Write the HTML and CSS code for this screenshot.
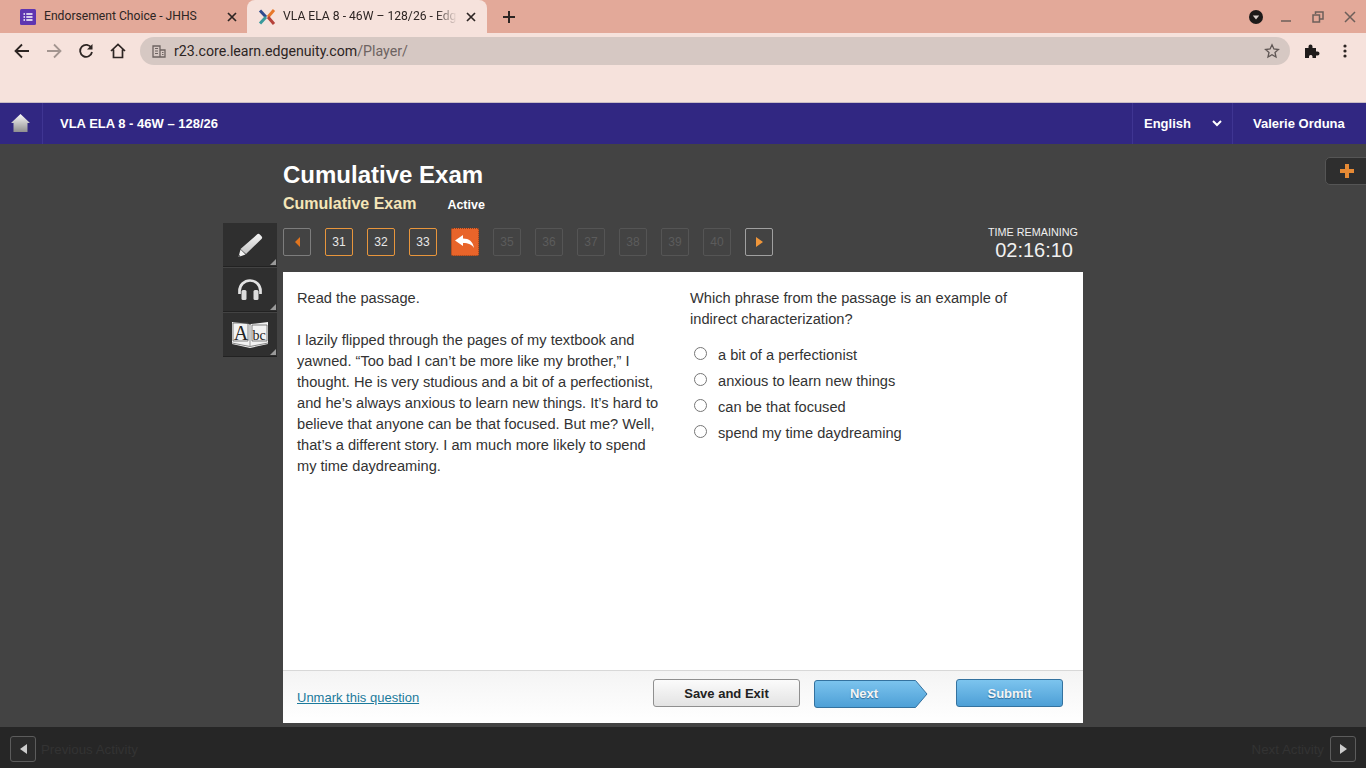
FILE: index.html
```html
<!DOCTYPE html>
<html lang="en">
<head>
<meta charset="utf-8">
<title>VLA ELA 8 - 46W – 128/26 - Edgenuity</title>
<link rel="stylesheet" href="styles.css">
</head>
<body>
<header class="browser">
  <div class="tabstrip">
    <div class="tab">
      <svg class="tab-icon" width="16" height="16" viewBox="0 0 16 16"><rect width="16" height="16" rx="1.5" fill="#5e35b1"/><path d="M3.5 4.2h1.5v1.5H3.500zM6.300 4.200h6.200v1.500H6.300zM3.500 7.200h1.500v1.500H3.500zM6.300 7.200h6.200v1.500H6.300zM3.500 10.200h1.500v1.500H3.500zM6.300 10.200h6.200v1.500H6.300z" fill="#fff"/></svg>
      <span class="tab-title">Endorsement Choice - JHHS</span>
      <svg class="tab-close" width="10" height="10" viewBox="0 0 10 10"><path d="M1 1l8 8M9 1l-8 8" stroke="#2d2523" stroke-width="1.700"/></svg>
    </div>
    <div class="tab tab-active">
      <svg class="tab-icon" width="18" height="18" viewBox="0 0 18 18"><path d="M2 2.500L8 9" stroke="#2e4a8e" stroke-width="3"/><path d="M16 2L10 9" stroke="#e8792b" stroke-width="3"/><path d="M2 15.500L8 9" stroke="#3a9a9c" stroke-width="3"/><path d="M16 16L10 9" stroke="#b5413a" stroke-width="3"/></svg>
      <span class="tab-title tab-title-fade">VLA ELA 8 - 46W – 128/26 - Edg</span>
      <svg class="tab-close" width="10" height="10" viewBox="0 0 10 10"><path d="M1 1l8 8M9 1l-8 8" stroke="#2d2523" stroke-width="1.700"/></svg>
    </div>
    <svg class="new-tab" width="12" height="12" viewBox="0 0 12 12"><path d="M6 0v12M0 6h12" stroke="#2d2523" stroke-width="2"/></svg>
    <div class="window-controls">
      <svg width="16" height="16" viewBox="0 0 16 16"><circle cx="8" cy="8" r="7" fill="#1d1a19"/><path d="M4.800 6.500h6.400L8 10.500z" fill="#d9d0cc"/></svg>
      <svg class="win-min" width="12" height="12" viewBox="0 0 12 12"><path d="M1 10h10" stroke="#6d5f5a" stroke-width="1.500"/></svg>
      <svg class="win-max" width="12" height="12" viewBox="0 0 12 12"><path d="M3.500 3V1h7.500v7h-3M1 4h6.500v7H1z" fill="none" stroke="#6d5f5a" stroke-width="1.500"/></svg>
      <svg class="win-close" width="12" height="12" viewBox="0 0 12 12"><path d="M1 1l10 10M11 1L1 11" stroke="#6d5f5a" stroke-width="1.500"/></svg>
    </div>
  </div>
  <div class="toolbar">
    <svg class="tb-back" width="16" height="16" viewBox="0 0 16 16"><path d="M15 8H2M8 1.500L1.500 8 8 14.500" fill="none" stroke="#2d2523" stroke-width="1.800"/></svg>
    <svg class="tb-forward" width="16" height="16" viewBox="0 0 16 16"><path d="M1 8h13M8 1.500L14.500 8 8 14.500" fill="none" stroke="#a39590" stroke-width="1.800"/></svg>
    <svg class="tb-reload" width="16" height="16" viewBox="0 0 16 16"><path d="M13.400 5A6 6 0 1 0 14 9" fill="none" stroke="#2d2523" stroke-width="1.800"/><path d="M14.500 1v5.500H9z" fill="#2d2523"/></svg>
    <svg class="tb-home" width="16" height="16" viewBox="0 0 16 16"><path d="M1 8l7-6.500L15 8M3.500 6.500V14.500h9V6.500" fill="none" stroke="#2d2523" stroke-width="1.700"/></svg>
    <div class="omnibox">
      <svg class="omni-site" width="14" height="14" viewBox="0 0 14 14"><path d="M1 2h7v11H1zM8 6h5v7H8z" fill="none" stroke="#6d6361" stroke-width="1.300"/><path d="M3 4.500h3M3 7h3M3 9.500h3M10 8.500h1.500M10 10.500h1.500" stroke="#6d6361" stroke-width="1.200"/></svg>
      <span class="url">r23.core.learn.edgenuity.com<span class="url-path">/Player/</span></span>
      <svg class="omni-star" width="16" height="16" viewBox="0 0 16 16"><path d="M8 1.800l1.900 4.200 4.500.5-3.400 3 1 4.500L8 11.700 4 14l1-4.500-3.400-3 4.500-.5z" fill="none" stroke="#5f5654" stroke-width="1.300"/></svg>
    </div>
    <svg class="tb-ext" width="16" height="16" viewBox="0 0 16 16"><path d="M1 5h3.500V3.500a2 2 0 0 1 4 0V5H12v3.500h1.500a2 2 0 0 1 0 4H12V15H8.500v-1.500a1.800 1.800 0 0 0-3.500 0V15H1z" fill="#1f1b1a"/></svg>
    <svg class="tb-menu" width="4" height="14" viewBox="0 0 4 14"><circle cx="2" cy="2" r="1.600" fill="#2d2523"/><circle cx="2" cy="7" r="1.600" fill="#2d2523"/><circle cx="2" cy="12" r="1.600" fill="#2d2523"/></svg>
  </div>
  <div class="bookmarks"></div>
</header>

<nav class="appbar">
  <a class="app-home">
    <svg width="19" height="18" viewBox="0 0 19 18"><defs><linearGradient id="homeFill" x1="0" y1="0" x2="0" y2="1"><stop offset="0" stop-color="#fbfbfb"/><stop offset="1" stop-color="#8f8f8f"/></linearGradient></defs><path d="M9.500 0L19 9H16.500V18H2.500V9H0z" fill="url(#homeFill)"/></svg>
  </a>
  <div class="app-title">VLA ELA 8 - 46W – 128/26</div>
  <div class="app-lang"><span>English</span><svg width="10" height="7" viewBox="0 0 10 7"><path d="M1 1l4 4 4-4" fill="none" stroke="#fff" stroke-width="2"/></svg></div>
  <div class="app-user">Valerie Orduna</div>
</nav>

<main class="stage">
  <button class="plus-tab"><svg width="14" height="14" viewBox="0 0 14 14"><path d="M5 0h4v5h5v4H9v5H5V9H0V5h5z" fill="#e68a35"/></svg></button>
  <div class="exam">
    <div class="exam-head">
      <h1 class="exam-title">Cumulative Exam</h1>
      <div class="exam-sub"><span class="exam-name">Cumulative Exam</span><span class="exam-status">Active</span></div>
    </div>
    <aside class="tools">
      <div class="tool">
        <svg width="28" height="28" viewBox="0 0 28 28"><defs><linearGradient id="toolFill" x1="0" y1="0" x2="0" y2="1"><stop offset="0" stop-color="#f4f4f4"/><stop offset="1" stop-color="#c4c4c4"/></linearGradient></defs><path d="M21 3.500a2 2 0 0 1 2.800 0l1.700 1.700a2 2 0 0 1 0 2.800L10 23 4.500 18z" fill="url(#toolFill)"/><path d="M4.500 18.500L9.500 23.500 2.500 26z" fill="#f4f4f4"/><path d="M3.300 24l-.8 2 2.100-.8z" fill="#333"/></svg>
      </div>
      <div class="tool">
        <svg width="26" height="21" viewBox="0 0 26 21"><path d="M2.500 15V12a10.500 10.500 0 0 1 21 0v3" fill="none" stroke="#e2e2e2" stroke-width="2.700"/><rect x="4.500" y="11" width="5" height="10" rx="1.500" fill="#dcdcdc"/><rect x="16.500" y="11" width="5" height="10" rx="1.500" fill="#dcdcdc"/></svg>
      </div>
      <div class="tool">
        <svg width="36" height="27" viewBox="0 0 36 27"><path d="M0 1l17 2 1 1 1-1 17-2v22l-18 4-18-4z" fill="#f2f2f2"/><path d="M0 22l18 3.500 18-3.500" fill="none" stroke="#888" stroke-width="1"/><path d="M18 4v21" stroke="#999" stroke-width="1"/><path d="M1 2h15v18H1zM20 4h15v16H20z" fill="none" stroke="#555" stroke-width=".7"/><text class="abc-a" x="9" y="18.500" text-anchor="middle">A</text><text class="abc-bc" x="27" y="18.500" text-anchor="middle">bc</text></svg>
      </div>
    </aside>
    <div class="qnav">
      <button class="qbtn qbtn-back"><svg width="5" height="10" viewBox="0 0 5 10"><path d="M5 0v10L0 5z" fill="#e0751f"/></svg></button>
      <button class="qbtn qbtn-done">31</button>
      <button class="qbtn qbtn-done">32</button>
      <button class="qbtn qbtn-done">33</button>
      <button class="qbtn qbtn-current"><svg width="20" height="14" viewBox="0 0 20 14"><path d="M0 5.500L8 0v3.500c6 0 10 3 11 9.500-2-3.500-5.500-5-11-5V11z" fill="#fff"/></svg></button>
      <button class="qbtn qbtn-off">35</button>
      <button class="qbtn qbtn-off">36</button>
      <button class="qbtn qbtn-off">37</button>
      <button class="qbtn qbtn-off">38</button>
      <button class="qbtn qbtn-off">39</button>
      <button class="qbtn qbtn-off">40</button>
      <button class="qbtn qbtn-forward"><svg width="7" height="10" viewBox="0 0 7 10"><path d="M0 0v10l7-5z" fill="#f0963a"/></svg></button>
      <div class="timer"><div class="timer-label">TIME REMAINING</div><div class="timer-value">02:16:10</div></div>
    </div>
    <section class="card">
      <div class="card-body">
        <div class="passage">
          <p>Read the passage.</p>
          <p>I lazily flipped through the pages of my textbook and yawned. “Too bad I can’t be more like my brother,” I thought. He is very studious and a bit of a perfectionist, and he’s always anxious to learn new things. It’s hard to believe that anyone can be that focused. But me? Well, that’s a different story. I am much more likely to spend my time daydreaming.</p>
        </div>
        <div class="question">
          <p>Which phrase from the passage is an example of indirect characterization?</p>
          <label class="choice"><input type="radio" name="a"><span>a bit of a perfectionist</span></label>
          <label class="choice"><input type="radio" name="a"><span>anxious to learn new things</span></label>
          <label class="choice"><input type="radio" name="a"><span>can be that focused</span></label>
          <label class="choice"><input type="radio" name="a"><span>spend my time daydreaming</span></label>
        </div>
      </div>
      <div class="card-foot">
        <a class="unmark" href="#">Unmark this question</a>
        <button class="btn btn-save">Save and Exit</button>
        <button class="btn-next"><svg class="next-shape" width="114" height="28" viewBox="0 0 114 28"><defs><linearGradient id="nextFill" x1="0" y1="0" x2="0" y2="1"><stop offset="0" stop-color="#7cc4ee"/><stop offset="1" stop-color="#4d9fd6"/></linearGradient></defs><path d="M3 .500H101.500L113 14 101.500 27.500H3A2.500 2.500 0 0 1 .500 25V3A2.500 2.500 0 0 1 3 .500z" fill="url(#nextFill)" stroke="#34729f"/></svg><span class="next-label">Next</span></button>
        <button class="btn btn-submit">Submit</button>
      </div>
    </section>
  </div>
</main>

<footer class="activitybar">
  <button class="act-btn"><svg width="7" height="10" viewBox="0 0 7 10"><path d="M7 0v10L0 5z" fill="#ccc"/></svg></button>
  <span class="act-label">Previous Activity</span>
  <span class="act-label act-next">Next Activity</span>
  <button class="act-btn"><svg width="7" height="10" viewBox="0 0 7 10"><path d="M0 0v10l7-5z" fill="#ccc"/></svg></button>
</footer>
</body>
</html>
```
FILE: styles.css
```css
* { box-sizing: border-box; }
html, body { margin: 0; height: 100%; }
body {
  width: 1366px; height: 768px; overflow: hidden;
  display: flex; flex-direction: column;
  background: #434343;
  font-family: "Liberation Sans", Arial, sans-serif;
}
button { font-family: inherit; padding: 0; cursor: pointer; }
svg { display: block; flex: none; }

/* browser chrome */
.browser { height: 103px; background: #f6e2dc; border-bottom: 1px solid #c9bcc4; flex: none; }
.tabstrip { height: 33px; background: #e3a999; display: flex; align-items: center; position: relative; padding-left: 8px; }
.tab { width: 239px; height: 33px; display: flex; align-items: center; padding: 0 10px 0 12px; font-family: Roboto, sans-serif; font-size: 12.150px; color: #2d2523; }
.tab-icon { margin-right: 8px; }
.tab-title { flex: 1; white-space: nowrap; padding-bottom: 1px; }
.tab-active { width: 240px; background: #f6e2dc; border-radius: 8px 8px 0 0; padding-left: 11px; }
.tab-active .tab-icon { margin-right: 7px; }
.tab-title-fade { -webkit-mask-image: linear-gradient(to right, #000 88%, transparent 100%); mask-image: linear-gradient(to right, #000 88%, transparent 100%); flex: none; width: 174px; margin-right: 9px; }
.new-tab { margin-left: 16px; }
.window-controls { margin-left: auto; display: flex; align-items: center; padding-right: 10px; }
.win-min { margin-left: 16px; }
.win-max { margin-left: 20px; }
.win-close { margin-left: 20px; }
.toolbar { height: 37px; display: flex; align-items: center; padding: 0 14px 1px 14px; }
.tb-forward { margin-left: 16px; }
.tb-reload { margin-left: 16px; }
.tb-home { margin-left: 16px; }
.omnibox { margin-left: 14px; width: 1150px; height: 28px; border-radius: 14px; background: #d6c8c3; display: flex; align-items: center; padding: 0 10px 0 12px; }
.omni-site { margin-right: 8px; }
.url { flex: 1; font-family: Roboto, sans-serif; font-size: 14.180px; color: #2d2523; }
.url-path { color: #6d6361; }
.tb-ext { margin-left: 14px; }
.tb-menu { margin-left: 23px; }

/* application bar */
.appbar { height: 41px; background: #312782; color: #fff; display: flex; align-items: center; flex: none; font-size: 13px; font-weight: bold; }
.app-home { width: 43px; height: 41px; display: flex; align-items: center; justify-content: center; border-right: 1px solid #3f3592; padding: 0 2px 2px 0; }
.app-title { flex: 1; padding-left: 17px; }
.app-lang { width: 101px; height: 41px; border-left: 1px solid #3f3592; border-right: 1px solid #3f3592; display: flex; align-items: center; justify-content: space-between; padding: 0 10px 0 11px; }
.app-user { width: 133px; padding-left: 20px; }

/* main stage */
.stage { flex: 1; position: relative; background: #434343; min-height: 0; }
.plus-tab { position: absolute; left: 1325px; top: 13px; width: 50px; height: 28px; background: #2e2e2e; border: 1px solid #555; border-radius: 5px; display: flex; align-items: center; padding-left: 14px; }
.exam { margin-left: 223px; width: 860px; display: grid; grid-template-columns: 60px 800px; grid-template-rows: 79px 49px 451px; }
.exam-head { grid-column: 2; grid-row: 1; color: #fff; padding-top: 17px; }
.exam-title { margin: 0; font-size: 24px; line-height: 27px; font-weight: bold; }
.exam-sub { display: flex; align-items: baseline; margin-top: 6px; }
.exam-name { font-size: 16px; line-height: 19px; font-weight: bold; color: #f5e6b8; }
.exam-status { font-size: 12.500px; font-weight: bold; margin-left: 31px; }

.tools { grid-column: 1; grid-row: 2 / 4; display: flex; flex-direction: column; gap: 1px; align-items: flex-start; }
.tool { width: 54px; height: 44px; background: #2f2f2f; border-bottom: 1px solid #222; position: relative; display: flex; align-items: center; justify-content: center; }
.tool::after { content: ""; position: absolute; right: 1px; bottom: 1px; border-style: solid; border-width: 0 0 6px 6px; border-color: transparent transparent #9a9a9a transparent; }

.qnav { grid-column: 2; grid-row: 2; display: flex; gap: 14px; padding-top: 5px; align-items: flex-start; }
.qbtn { width: 28px; height: 28px; border-radius: 2px; background: transparent; font-size: 12px; color: #e8e8e8; display: flex; align-items: center; justify-content: center; }
.qbtn-back { border: 1px solid #7d7d7d; }
.qbtn-forward { border: 1px solid #a0a0a0; }
.qbtn.qbtn-done { border: 1px solid #e8963c; }
.qbtn-current { background: #e8642a; border: 1px dotted #8a3d1a; }
.qbtn-off { border: 1px solid #555; color: #5c5c5c; }
.timer { margin-left: auto; margin-right: 5px; color: #f0f0f0; margin-top: -2px; text-align: right; }
.timer-label { font-size: 10.800px; line-height: 12px; }
.timer-value { font-size: 20px; line-height: 24px; padding-right: 5px; }

.card { grid-column: 2; grid-row: 3; background: #fff; display: flex; flex-direction: column; color: #333; font-size: 14.630px; line-height: 21px; }
.card-body { flex: 1; display: flex; padding: 16px 14px 0; }
.card-body p { margin: 0 0 21px; }
.passage { width: 393px; padding-right: 26px; }
.question { flex: 1; padding-right: 40px; }
.question p { margin-bottom: 15px; }
.choice { display: flex; align-items: flex-start; height: 26px; }
.choice input { width: 13px; height: 13px; margin: 2px 11px 0 4px; flex: none; accent-color: #666; }

.card-foot { height: 53px; flex: none; border-top: 1px solid #d8d8d8; background: linear-gradient(#f4f4f4, #fff); display: flex; align-items: flex-start; padding: 8px 20px 0 14px; }
.unmark { color: #1c7a9c; font-size: 13px; margin-top: 8px; margin-right: auto; text-decoration: underline; }
.btn { height: 28px; border-radius: 3px; font-size: 13px; font-weight: bold; padding-top: 1px; }
.btn-save { width: 147px; border: 1px solid #8f8f8f; color: #222; background: linear-gradient(#fbfbfb, #e3e3e3); margin-right: 14px; }
.btn-next { width: 114px; height: 28px; border: 0; background: none; position: relative; margin-top: 1px; margin-right: 28px; }
.next-shape { position: absolute; left: 0; top: 0; }
.next-label { position: relative; display: block; width: 100px; font-size: 13px; font-weight: bold; color: #f4f4f4; text-shadow: 0 1px 1px #2e6c99; line-height: 28px; }
.btn-submit { width: 107px; border: 1px solid #34729f; color: #f4f4f4; background: linear-gradient(#7cc4ee, #4d9fd6); text-shadow: 0 1px 1px #2e6c99; }

/* bottom bar */
.activitybar { height: 41px; flex: none; background: #262626; display: flex; align-items: center; padding: 3px 10px 0; font-size: 13.300px; color: #333; }
.act-btn { width: 26px; height: 26px; background: #2b2b2b; border: 1px solid #5c5c5c; border-radius: 3px; display: flex; align-items: center; justify-content: center; }
.act-label { margin-left: 5px; }
.act-next { margin-left: auto; margin-right: 6px; }
.abc-a { font-family: "Liberation Serif", serif; font-size: 20px; fill: #222; }
.abc-bc { font-family: "Liberation Serif", serif; font-size: 14px; fill: #222; }
```
